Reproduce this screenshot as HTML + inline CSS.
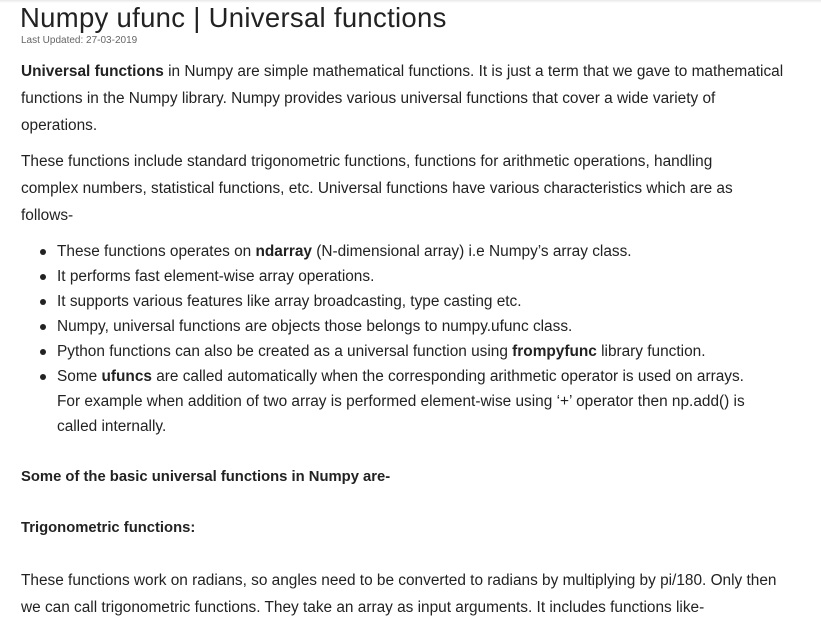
<!DOCTYPE html>
<html><head><meta charset="utf-8"><style>
body{margin:0;width:821px;height:631px;overflow:hidden;background:#fff;font-family:"Liberation Sans",sans-serif;color:#222;position:relative}
.l{position:absolute;left:21px;white-space:nowrap;font-size:15.4px;line-height:20px}
.b{left:57px}
.d{position:absolute;left:40px;width:6px;height:6px;border-radius:50%;background:#222}
h1{position:absolute;left:20px;top:0;margin:0;font-weight:normal;font-size:27.5px;line-height:36px;color:#222;letter-spacing:0.3px}
.sm{position:absolute;left:21px;top:35px;font-size:10px;color:#666}
.h{font-weight:bold;font-size:14.8px}
.top{position:absolute;left:0;top:0;width:821px;height:3px;background:linear-gradient(#e8e8e8,#fff)}
</style></head><body>
<div class="top"></div>
<h1>Numpy ufunc | Universal functions</h1>
<div class="sm">Last Updated: 27-03-2019</div>
<div class="l" style="top:62px"><b>Universal functions</b> in Numpy are simple mathematical functions. It is just a term that we gave to mathematical</div>
<div class="l" style="top:89px">functions in the Numpy library. Numpy provides various universal functions that cover a wide variety of</div>
<div class="l" style="top:116px">operations.</div>
<div class="l" style="top:152px">These functions include standard trigonometric functions, functions for arithmetic operations, handling</div>
<div class="l" style="top:179px">complex numbers, statistical functions, etc. Universal functions have various characteristics which are as</div>
<div class="l" style="top:206px">follows-</div>
<div class="d" style="top:249px"></div><div class="l b" style="top:242px">These functions operates on <b>ndarray</b> (N-dimensional array) i.e Numpy’s array class.</div>
<div class="d" style="top:274px"></div><div class="l b" style="top:267px">It performs fast element-wise array operations.</div>
<div class="d" style="top:299px"></div><div class="l b" style="top:292px">It supports various features like array broadcasting, type casting etc.</div>
<div class="d" style="top:324px"></div><div class="l b" style="top:317px">Numpy, universal functions are objects those belongs to numpy.ufunc class.</div>
<div class="d" style="top:349px"></div><div class="l b" style="top:342px">Python functions can also be created as a universal function using <b>frompyfunc</b> library function.</div>
<div class="d" style="top:374px"></div><div class="l b" style="top:367px">Some <b>ufuncs</b> are called automatically when the corresponding arithmetic operator is used on arrays.</div>
<div class="l b" style="top:392px">For example when addition of two array is performed element-wise using ‘+’ operator then np.add() is</div>
<div class="l b" style="top:417px">called internally.</div>
<div class="l h" style="top:467px">Some of the basic universal functions in Numpy are-</div>
<div class="l h" style="top:518px">Trigonometric functions:</div>
<div class="l" style="top:571px">These functions work on radians, so angles need to be converted to radians by multiplying by pi/180. Only then</div>
<div class="l" style="top:598px">we can call trigonometric functions. They take an array as input arguments. It includes functions like-</div>
</body></html>
